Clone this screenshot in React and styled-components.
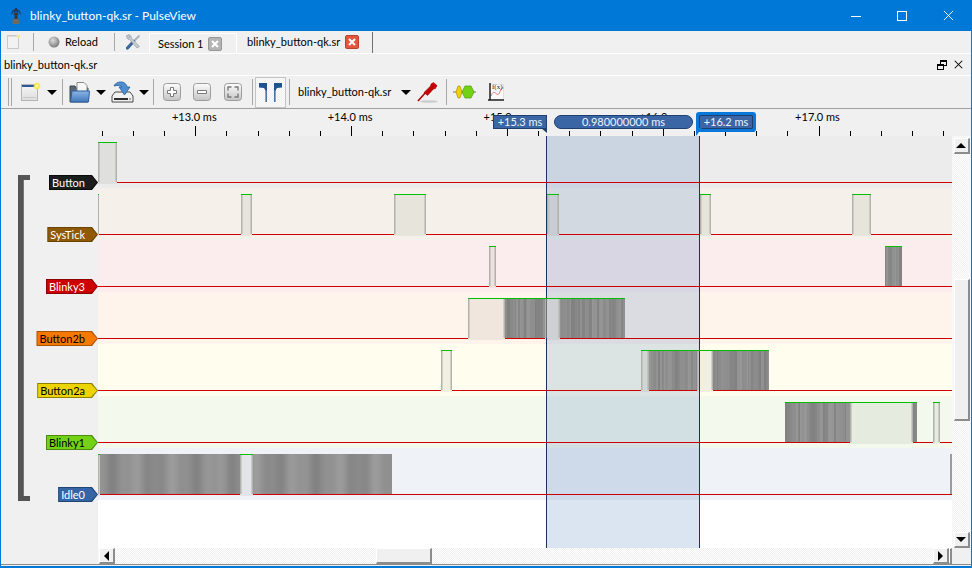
import React from "react";
import styled, { createGlobalStyle } from "styled-components";

const Global = createGlobalStyle`
  html, body { margin: 0; padding: 0; overflow: hidden; background: #0078d7; }
  #root { width: 972px; height: 568px; }
  * { box-sizing: border-box; }
`;

const UI = `"Lato", "Noto Sans", sans-serif`;

const Win = styled.div`
  width: 972px; height: 568px; display: flex; flex-direction: column;
  background: #0078d7; font: 11px/14px ${UI}; color: #000; overflow: hidden;
`;
const TitleBar = styled.div`
  height: 31px; flex: none; display: flex; align-items: center; color: #fff; padding: 0 1px 0 8px;
`;
const TitleText = styled.div`
  margin-left: 6px; font-size: 12px; flex: 1; white-space: nowrap;
`;
const WinBtn = styled.div`
  width: 46px; height: 31px; display: flex; align-items: center; justify-content: center;
`;
const Client = styled.div`
  flex: 1; margin: 0 1px; background: #f0f0f0; display: flex; flex-direction: column; min-height: 0;
`;
const TabRow = styled.div`
  height: 23px; flex: none; display: flex; align-items: flex-end; border-bottom: 1px solid #fff; position: relative;
`;
const TabTool = styled.div`
  height: 22px; display: flex; align-items: center; margin-left: ${p => p.$ml || 0}px; flex: none; gap: 5px;
  width: ${p => p.$w}px;
`;
const VSep = styled.div`
  width: 1px; flex: none; height: ${p => p.$h || 18}px; align-self: center; margin-left: ${p => p.$ml || 0}px;
  background: ${p => p.$c || "#a8a8a8"};
`;
const Tab = styled.div`
  height: ${p => p.$active ? 22 : 20}px; width: ${p => p.$w}px; margin-left: ${p => p.$ml || 0}px; flex: none;
  display: flex; align-items: center; justify-content: space-between; white-space: nowrap;
  padding: 0 ${p => p.$pr}px 0 ${p => p.$pl}px;
  ${p => p.$active ? "" : "border: 1px solid #fff; border-bottom: 0; border-radius: 2px 2px 0 0;"}
  margin-top: ${p => p.$active ? 0 : 2}px;
`;
const TabClose = styled.div`
  width: 14px; height: 14px; border-radius: 2px; flex: none; display: flex; align-items: center; justify-content: center;
  background: ${p => p.$red ? "#e2563e" : "#b4b4b4"};
  border: 1px solid ${p => p.$red ? "#c04030" : "#989898"};
`;
const DockTitle = styled.div`
  height: 22px; flex: none; display: flex; align-items: center; padding-left: 3px; border-bottom: 1px solid #fff;
`;
const DockText = styled.div` flex: 1; `;
const DockBtn = styled.div`
  width: 16px; height: 14px; display: flex; align-items: center; justify-content: center; margin-right: ${p => p.$mr || 0}px;
`;
const Toolbar = styled.div`
  height: 33px; flex: none; display: flex; align-items: center; border-bottom: 1px solid #a0a0a0;
`;
const Handle = styled.div`
  width: 4px; height: 28px; margin-left: 7px; flex: none; border-left: 1px solid #a8a8a8; border-right: 1px solid #a8a8a8;
`;
const Tool = styled.div`
  flex: none; width: ${p => p.$w}px; height: ${p => p.$h || 22}px; margin-left: ${p => p.$ml}px;
  display: flex; align-items: center; justify-content: center;
`;
const ArrowDown = styled.div`
  flex: none; margin-left: ${p => p.$ml}px; width: 0; height: 0;
  border-left: 5px solid transparent; border-right: 5px solid transparent; border-top: 5px solid #000;
`;
const Toggle = styled.div`
  flex: none; width: 31px; height: 31px; margin-left: 2px; display: flex; align-items: center; justify-content: center;
  border: 1px solid #c4c4c4;
  background: repeating-conic-gradient(#f0f0f0 0 25%, #fbfbfb 0 50%) 0 0 / 2px 2px;
`;
const Combo = styled.div`
  flex: none; margin-left: 8px; width: 103px; white-space: nowrap;
`;
const Ruler = styled.div`
  height: 27px; flex: none; position: relative; background: #f0f0f0;
`;
const RulerTicks = styled.svg`
  position: absolute; left: 97px; top: 0; display: block;
`;
const TimeLabel = styled.div`
  position: absolute; top: 1px; transform: translateX(-50%); white-space: nowrap;
`;
const Flag = styled.div`
  position: absolute; top: 6px; height: 14px; color: #eef3fa; background: #3b66a6; font-size: 11px; line-height: 12px;
  display: flex; align-items: center; justify-content: center; white-space: nowrap;
  border: 1px solid #1f3f70; z-index: 2;
  ${p => p.$pill && "border-radius: 7px;"}
  ${p => p.$selected && "border-radius: 1px; box-shadow: 0 0 0 3px #0a78d8;"}
`;
const Tail = styled.div`
  position: absolute; top: 19px; width: 6px; height: ${p => p.$h}px; background: ${p => p.$c}; z-index: 3;
  clip-path: polygon(${p => p.$side === "r" ? "0 0, 100% 0, 100% 100%" : "0 0, 100% 0, 0 100%"});
`;
const Body = styled.div`
  height: 412px; flex: none; display: flex;
`;
const Traces = styled.div`
  flex: none; width: 951px; display: flex; flex-direction: column; position: relative; background: #fff;
`;
const Row = styled.div`
  height: 52px; flex: none; display: flex;
`;
const Gutter = styled.div`
  width: 97px; flex: none; display: flex; justify-content: flex-end; align-items: flex-end; background: #f0f0f0;
`;
const Track = styled.div`
  flex: 1; background: ${p => p.$bg};
`;
const Wave = styled.svg`
  display: block; position: relative; z-index: 3;
`;
const Empty = styled.div`
  flex: 1; display: flex;
`;
const EmptyGutter = styled.div`
  width: 97px; background: #f0f0f0;
`;
const Label = styled.div`
  height: 15px; margin-bottom: -2px; padding: 1px; position: relative; z-index: 1; background: ${p => p.$line};
  clip-path: polygon(0 0, calc(100% - 6px) 0, 100% 50%, calc(100% - 6px) 100%, 0 100%);
`;
const LabelFill = styled.div`
  height: 13px; line-height: 13px; padding: 0 12px 0 2px; background: ${p => p.$fill}; color: ${p => p.$text}; font-size: 11px;
  clip-path: polygon(0 0, calc(100% - 6px) 0, 100% 50%, calc(100% - 6px) 100%, 0 100%);
  white-space: nowrap;
`;
const Bracket = styled.div`
  position: absolute; left: 17px; top: 39px; width: 12px; height: 326px; z-index: 1;
  border: 5px solid #555; border-right: 0;
  box-shadow: inset 1px 0 0 #777;
`;
const CursorBand = styled.div`
  position: absolute; left: 545px; width: 154px; top: 0; bottom: 0; z-index: 2;
  background: rgba(75, 125, 185, .2);
  border-left: 1px solid #1a3358; border-right: 1px solid #1a3358;
`;
const VScroll = styled.div`
  flex: 1; display: flex; flex-direction: column; align-items: center;
  background: repeating-conic-gradient(#f0f0f0 0 25%, #fff 0 50%) 0 0 / 2px 2px;
`;
const ScrollBtn = styled.div`
  width: ${p => p.$w || 16}px; height: ${p => p.$h || 16}px; flex: none; background: #f0f0f0;
  display: flex; align-items: center; justify-content: center;
  border-style: solid; border-width: 1px 2px 2px 1px; border-color: #fff #8c8c8c #8c8c8c #fff;
  margin-top: ${p => p.$mt || 0}px; margin-left: ${p => p.$ml || 0}px;
`;
const Spacer = styled.div` flex: 1; `;
const HRow = styled.div`
  height: 17px; flex: none; display: flex; border-bottom: 1px solid #8c8c8c;
`;
const HGutter = styled.div` width: 97px; flex: none; background: #f0f0f0; `;
const HScroll = styled.div`
  width: 854px; flex: none; display: flex;
  background: repeating-conic-gradient(#f0f0f0 0 25%, #fff 0 50%) 0 0 / 2px 2px;
`;
const Corner = styled.div` flex: 1; background: #f0f0f0; `;
const TriU = styled.div`
  width: 0; height: 0; border-left: 5px solid transparent; border-right: 5px solid transparent; border-bottom: 5px solid #000;
`;
const TriD = styled.div`
  width: 0; height: 0; border-left: 5px solid transparent; border-right: 5px solid transparent; border-top: 5px solid #000;
`;
const TriL = styled.div`
  width: 0; height: 0; border-top: 5px solid transparent; border-bottom: 5px solid transparent; border-right: 5px solid #000;
`;
const TriR = styled.div`
  width: 0; height: 0; border-top: 5px solid transparent; border-bottom: 5px solid transparent; border-left: 5px solid #000;
`;
const BottomEdge = styled.div` height: 2px; flex: none; `;

/* ---------- data ---------- */
const rows = [
  { name: "Button", bg: "#ececec", fill: "#1c1c1c", line: "#0c0c0c", text: "#fff", segs: [[98, 117, "h"]] },
  { name: "SysTick", bg: "#f5f1ea", fill: "#8f5902", line: "#6a4201", text: "#fff", segs: [[98, 99, "h"], [241, 252, "h"], [394, 426, "h"], [547, 559, "h"], [700, 711, "h"], [852, 871, "h"]] },
  { name: "Blinky3", bg: "#fbeded", fill: "#cc0000", line: "#8f0000", text: "#fff", segs: [[489, 496, "h"], [885, 902, "d"]] },
  { name: "Button2b", bg: "#fef4ec", fill: "#f57900", line: "#a85300", text: "#000", segs: [[468, 505, "h"], [505, 545, "d"], [545, 560, "h"], [560, 625, "d"]] },
  { name: "Button2a", bg: "#fffeee", fill: "#edd400", line: "#8f8000", text: "#000", segs: [[441, 452, "h"], [641, 649, "h"], [649, 697, "d"], [697, 713, "h"], [713, 769, "d"]] },
  { name: "Blinky1", bg: "#f4f9ee", fill: "#73d216", line: "#4e8a10", text: "#000", segs: [[785, 850, "d"], [850, 913, "h"], [913, 917, "d"], [933, 940, "h"]] },
  { name: "Idle0", bg: "#eff2f7", fill: "#3465a4", line: "#1f4477", text: "#fff", segs: [[98, 100, "h"], [100, 240, "i"], [240, 253, "h"], [253, 392, "i"], [950, 952, "i"]] },
];

function dense(x1, x2, seed) {
  const out = [];
  let s = seed * 7919 + x1;
  let x = x1;
  while (x < x2) {
    s = (s * 1103515245 + 12345) & 0x7fffffff;
    const w = 1 + ((s >> 8) % 3);
    const g = 128 + ((s >> 12) % 24);
    out.push([x, Math.min(w, x2 - x), `rgb(${g},${g},${g})`]);
    x += w;
  }
  return out;
}
function idle(x1, x2) {
  const out = [];
  for (let x = x1; x < x2; x++) {
    const g = Math.round(143 + 9 * Math.sin(x / 6.5) + 4 * Math.sin(x / 2.7 + 1));
    out.push([x, 1, `rgb(${g},${g},${g})`]);
  }
  return out;
}

function WaveForm({ segs, index }) {
  const X = x => x - 98;
  const HI = 6, LO = 46;
  const reds = [];
  let cur = 98;
  segs.forEach(([a, b, k]) => {
    if (k === "h") {
      if (a > cur) reds.push([cur, a]);
      cur = Math.max(cur, b);
    }
  });
  if (cur < 952) reds.push([cur, 952]);
  return (
    <Wave width="854" height="52" viewBox="0 0 854 52">
      {segs.map(([a, b, k], i) => {
        if (k === "h") {
          return (
            <g key={i}>
              <rect x={X(a)} y={HI} width={b - a} height={LO - HI + 2} fill="rgba(60,60,40,.07)" />
              <rect x={X(a)} y={HI} width={Math.min(1.5, b - a)} height={LO - HI} fill="#b2b2ac" />
              {b - a > 3 && <rect x={X(b) - 1.5} y={HI} width={1.5} height={LO - HI} fill="#b2b2ac" />}
            </g>
          );
        }
        const bars = k === "d" ? dense(a, b, index + 1) : idle(a, b);
        return (
          <g key={i}>
            {bars.map(([x, w, c]) => <rect key={x} x={X(x)} y={HI} width={w} height={LO - HI} fill={c} />)}
          </g>
        );
      })}
      {reds.map(([a, b], i) => <rect key={i} x={X(a)} y={LO} width={b - a} height={1} fill="#cc0000" />)}
      {segs.filter(s => s[2] !== "i").map(([a, b], i) => <rect key={i} x={X(a)} y={HI} width={b - a} height={1} fill="#00c000" />)}
    </Wave>
  );
}

const majors = [13, 14, 15, 16, 17];
const majorX = t => 194.3 + (t - 13) * 155.8;

function Ticks() {
  const lines = [];
  for (let i = -3; i <= 24; i++) {
    const x = 194.3 + i * 31.16 - 97;
    if (x < 0 || x > 855) continue;
    const major = ((i % 5) + 5) % 5 === 0;
    lines.push(<rect key={i} x={Math.round(x)} y={major ? 17 : 22} width="1" height={major ? 10 : 5} fill="#000" />);
  }
  return <RulerTicks width="855" height="27">{lines}</RulerTicks>;
}

/* ---------- icons ---------- */
const AppIcon = () => (
  <svg width="16" height="18" viewBox="0 0 16 18">
    <path d="M8 1L3 7M8 1l5 6M8 1L6 8M8 1l2 7M4 4h8" stroke="#1f3a5c" strokeWidth="1.1" fill="none" />
    <rect x="6.5" y="6" width="3" height="7" fill="#3e352c" />
    <rect x="4.500" y="12" width="7" height="5" rx="1" fill="#6e6a60" />
  </svg>
);
const Close = ({ s = 12, c = "#fff", w = 1.2 }) => (
  <svg width={s} height={s} viewBox="0 0 12 12"><path d="M1 1l10 10M11 1L1 11" stroke={c} strokeWidth={w} /></svg>
);
const TabX = () => (
  <svg width="8" height="8" viewBox="0 0 8 8"><path d="M1 1l6 6M7 1L1 7" stroke="#fff" strokeWidth="2" /></svg>
);
const NewDisabled = () => (
  <svg width="14" height="16" viewBox="0 0 14 16">
    <rect x=".5" y="1.500" width="11" height="13" fill="#f2f2f2" stroke="#c8c8c8" />
    <rect x="1" y="2" width="10" height="1" fill="#dcdcdc" />
    <circle cx="11.5" cy="2.500" r="2" fill="#f5e7a8" />
  </svg>
);
const Sphere = () => (
  <svg width="12" height="12" viewBox="0 0 12 12">
    <defs><radialGradient id="sp" cx=".4" cy=".35" r=".7"><stop offset="0" stopColor="#dcdcdc" /><stop offset="1" stopColor="#767676" /></radialGradient></defs>
    <circle cx="6" cy="6" r="5.5" fill="url(#sp)" />
  </svg>
);
const Tools = () => (
  <svg width="15" height="16" viewBox="0 0 15 16">
    <path d="M13.500 1.500L8 7" stroke="#aab4c0" strokeWidth="2" />
    <path d="M7.500 7.500L1.500 14" stroke="#3f6797" strokeWidth="3.200" strokeLinecap="round" />
    <path d="M1 1c-1 2 0 4.500 2.500 4.500L11 14l2.500-1.500L5.500 4C5.500 2 4 .5 2 .8L4 3 3 4z" fill="#c8ccd2" stroke="#8c929c" strokeWidth=".6" />
  </svg>
);
const DockFloat = () => (
  <svg width="10" height="10" viewBox="0 0 10 10" fill="none" stroke="#000">
    <rect x="3.5" y=".5" width="6" height="5" /><path d="M3.5 1.5h6" />
    <rect x=".5" y="4.5" width="6" height="5" fill="#f0f0f0" /><path d="M.5 5.5h6" />
  </svg>
);
const NewIcon = () => (
  <svg width="20" height="20" viewBox="0 0 20 20">
    <defs>
      <linearGradient id="nw" x1="0" y1="0" x2="0" y2="1"><stop offset="0" stopColor="#f6f6f6" /><stop offset="1" stopColor="#dedede" /></linearGradient>
      <radialGradient id="st"><stop offset="0" stopColor="#fffbd0" /><stop offset=".6" stopColor="#f7e63c" /><stop offset="1" stopColor="#f7e63c" stopOpacity="0" /></radialGradient>
    </defs>
    <rect x=".5" y="2.5" width="16" height="16" fill="url(#nw)" stroke="#b4b4b4" />
    <rect x="1" y="3" width="14" height="2" fill="#2a5a9c" />
    <rect x="2" y="15" width="13" height="1" fill="#c8c8c8" />
    <circle cx="16" cy="4" r="4" fill="url(#st)" />
  </svg>
);
const OpenIcon = () => (
  <svg width="22" height="21" viewBox="0 0 22 21">
    <defs><linearGradient id="fo" x1="0" y1="0" x2="0" y2="1"><stop offset="0" stopColor="#8db4e4" /><stop offset="1" stopColor="#3f78bc" /></linearGradient></defs>
    <path d="M1 4h5l1 2h12v14H1z" fill="#5a6675" stroke="#3c4652" />
    <path d="M8 .5h7l3 3V11H8z" fill="#f6f6f6" stroke="#8a8a8a" />
    <path d="M3 9h17.500l-1 11H1.500z" fill="url(#fo)" stroke="#2f5f9c" />
  </svg>
);
const SaveIcon = () => (
  <svg width="23" height="22" viewBox="0 0 23 22">
    <path d="M4 11h15l3 4v6H1v-6z" fill="#f2f2f2" stroke="#4a4a4a" />
    <rect x="3" y="17" width="14" height="2" fill="#2e2e2e" />
    <rect x="18" y="17" width="2" height="2" fill="#aaa" />
    <path d="M3 5c1-3 5-4.500 8-4 3 .5 5 3 5 5h3l-5.500 8L8 6h3c-1-1.500-4-2-8-1z" fill="#4f8ed0" stroke="#265f9c" strokeWidth=".8" />
  </svg>
);
const ZoomBtn = ({ kind }) => (
  <svg width="18" height="18" viewBox="0 0 18 18">
    <defs><linearGradient id={"z" + kind} x1="0" y1="0" x2="0" y2="1"><stop offset="0" stopColor="#fdfdfd" /><stop offset="1" stopColor="#c4c4c4" /></linearGradient></defs>
    <rect x=".5" y=".5" width="17" height="17" rx="3" fill={`url(#z${kind})`} stroke="#9c9c9c" />
    {kind === "plus" && <path d="M7.500 4.500h3v3h3v3h-3v3h-3v-3h-3v-3h3z" fill="#fff" stroke="#7a7a7a" />}
    {kind === "minus" && <path d="M4.500 7.500h9v3h-9z" fill="#fff" stroke="#7a7a7a" />}
    {kind === "fit" && <path d="M4 7.500V4h3.500M10.500 4H14v3.500M14 10.500V14h-3.500M7.500 14H4v-3.500" fill="none" stroke="#7a7a7a" strokeWidth="1.400" />}
  </svg>
);
const CursorIcon = () => (
  <svg width="23" height="19" viewBox="0 0 23 19" fill="#1d5294">
    <path d="M0 0h8v6.500L7 8 5 5 0 4.500z" />
    <rect x="6.500" y="5" width="1.300" height="14" />
    <path d="M15 0h8v4.500L18 5l-2 3-1-1.500z" />
    <rect x="15.200" y="5" width="1.300" height="14" />
  </svg>
);
const ProbeIcon = () => (
  <svg width="22" height="22" viewBox="0 0 22 22">
    <ellipse cx="12" cy="20.500" rx="9" ry="1.300" fill="#cdcdcd" />
    <path d="M1 20L9 11" stroke="#b80000" strokeWidth="1.600" />
    <path d="M7 11.500l3.500 3 6-6.500 2-.5 1.500-3-3.500-3-2.500 1.500-.5 2z" fill="#c80000" stroke="#8a0000" strokeWidth=".5" />
  </svg>
);
const DecoderIcon = () => (
  <svg width="23" height="14" viewBox="0 0 23 14">
    <path d="M0 7h23" stroke="#777" />
    <path d="M3 7l2-6h2l2 6-2 6H5z" fill="#edd400" stroke="#a89500" strokeWidth=".7" />
    <path d="M9 7l3-6h6l3 6-3 6h-6z" fill="#73d216" stroke="#4e9a06" strokeWidth=".7" />
  </svg>
);
const MathIcon = () => (
  <svg width="18" height="20" viewBox="0 0 18 20">
    <rect x="3.500" y="2.500" width="13" height="15" fill="#fafafa" stroke="#e4cccc" strokeWidth=".6" />
    <path d="M4 14c2-5 3.500-4 5-2.500s3 1.500 4-2 2.500-4 3.500-3.500" stroke="#e57070" fill="none" />
    <path d="M3 1v17M1 18h16" stroke="#222" strokeWidth="1.500" fill="none" />
    <text x="5" y="7" fontSize="7" fontFamily="'Liberation Serif', serif" fill="#222">f(x)</text>
  </svg>
);

export default function App() {
  const fname = "blinky_button-qk.sr";
  return (
    <Win>
      <Global />
      <TitleBar>
        <AppIcon />
        <TitleText>{fname} - PulseView</TitleText>
        <WinBtn>
          <svg width="10" height="10" viewBox="0 0 10 10"><path d="M0 5.500h10" stroke="#fff" /></svg>
        </WinBtn>
        <WinBtn>
          <svg width="10" height="10" viewBox="0 0 10 10"><rect x=".5" y=".5" width="9" height="9" fill="none" stroke="#fff" /></svg>
        </WinBtn>
        <WinBtn><Close s={11} w={1} /></WinBtn>
      </TitleBar>
      <Client>
        <TabRow>
          <TabTool $ml={6} $w={14}><NewDisabled /></TabTool>
          <VSep $ml={12} />
          <TabTool $ml={14} $w={66}><Sphere />Reload</TabTool>
          <VSep />
          <TabTool $ml={11} $w={15}><Tools /></TabTool>
          <Tab $w={88} $ml={8} $pl={8} $pr={14}>Session 1<TabClose><TabX /></TabClose></Tab>
          <Tab $active $w={135} $pl={10} $pr={13}>{fname}<TabClose $red><TabX /></TabClose></Tab>
          <VSep $h={21} $c="#707070" />
        </TabRow>
        <DockTitle>
          <DockText>{fname}</DockText>
          <DockBtn><DockFloat /></DockBtn>
          <DockBtn $mr={5}><Close s={9} c="#000" w={1.4} /></DockBtn>
        </DockTitle>
        <Toolbar>
          <Handle />
          <Tool $w={20} $ml={9}><NewIcon /></Tool>
          <ArrowDown $ml={6} />
          <VSep $h={26} $ml={5} />
          <Tool $w={22} $ml={6}><OpenIcon /></Tool>
          <ArrowDown $ml={5} />
          <Tool $w={23} $ml={5}><SaveIcon /></Tool>
          <ArrowDown $ml={5} />
          <VSep $h={26} $ml={4} />
          <Tool $w={18} $ml={9}><ZoomBtn kind="plus" /></Tool>
          <Tool $w={18} $ml={12}><ZoomBtn kind="minus" /></Tool>
          <Tool $w={18} $ml={13}><ZoomBtn kind="fit" /></Tool>
          <VSep $h={26} $ml={10} />
          <Toggle><CursorIcon /></Toggle>
          <VSep $h={26} $ml={3} />
          <Combo>{fname}</Combo>
          <ArrowDown $ml={0} />
          <Tool $w={22} $ml={6}><ProbeIcon /></Tool>
          <VSep $h={26} $ml={7} />
          <Tool $w={23} $ml={6}><DecoderIcon /></Tool>
          <Tool $w={18} $h={20} $ml={11}><MathIcon /></Tool>
        </Toolbar>
        <Ruler>
          <Ticks />
          {majors.map(t => (
            <TimeLabel key={t} style={{ left: majorX(t) - 1 }}>+{t}.0 ms</TimeLabel>
          ))}
          <Flag style={{ left: 492, width: 54 }}>+15.3 ms</Flag>
          <Tail $side="r" $h={5} $c="#1f3f70" style={{ left: 540 }} />
          <Flag $pill style={{ left: 553, width: 139 }}>0.980000000 ms</Flag>
          <Flag $selected style={{ left: 698, width: 54 }}>+16.2 ms</Flag>
          <Tail $side="l" $h={8} $c="#0a78d8" style={{ left: 695 }} />
        </Ruler>
        <Body>
          <Traces>
            {rows.map((r, i) => (
              <Row key={r.name}>
                <Gutter>
                  <Label $line={r.line}>
                    <LabelFill $fill={r.fill} $text={r.text}>{r.name}</LabelFill>
                  </Label>
                </Gutter>
                <Track $bg={r.bg}><WaveForm segs={r.segs} index={i} /></Track>
              </Row>
            ))}
            <Empty><EmptyGutter /></Empty>
            <Bracket />
            <CursorBand />
          </Traces>
          <VScroll>
            <ScrollBtn $mt={2}><TriU /></ScrollBtn>
            <ScrollBtn $h={142} $mt={125} />
            <Spacer />
            <ScrollBtn><TriD /></ScrollBtn>
          </VScroll>
        </Body>
        <HRow>
          <HGutter />
          <HScroll>
            <ScrollBtn $ml={1}><TriL /></ScrollBtn>
            <ScrollBtn $w={56} $ml={261} />
            <Spacer />
            <ScrollBtn><TriR /></ScrollBtn>
            <ScrollBtn $w={1} />
          </HScroll>
          <Corner />
        </HRow>
      </Client>
      <BottomEdge />
    </Win>
  );
}
